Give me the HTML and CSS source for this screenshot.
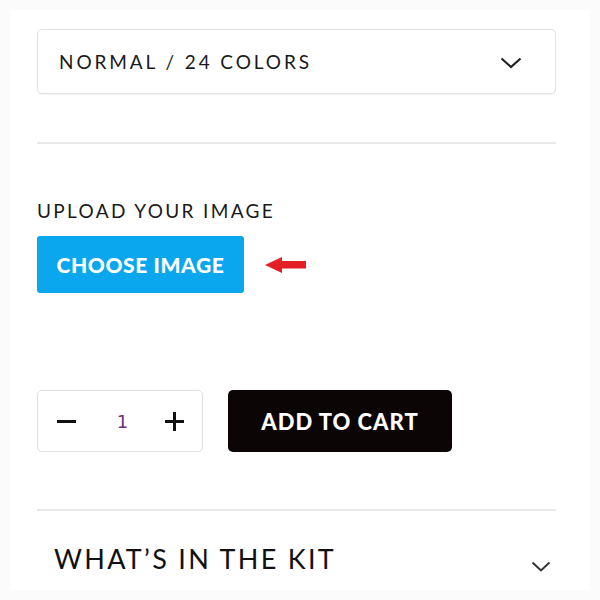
FILE: index.html
```html
<!DOCTYPE html>
<html>
<head>
<meta charset="utf-8">
<link rel="stylesheet" href="styles.css">
</head>
<body>
<div class="card">
  <div class="select">
    <span class="select-text">NORMAL / 24 COLORS</span>
    <svg class="chev" width="22" height="12" viewBox="0 0 22 12"><path d="M1.5 1.5 L11 10 L20.5 1.5" fill="none" stroke="#222" stroke-width="2.2"/></svg>
  </div>
  <div class="divider d1"></div>
  <div class="label">UPLOAD YOUR IMAGE</div>
  <div class="upload-row">
    <button class="choose">CHOOSE IMAGE</button>
    <svg class="arrow" width="42" height="16" viewBox="0 0 42 16"><path d="M0 8 L17 0 L17 4 L41 4 L41 11.5 L17 11.5 L17 16 Z" fill="#e31e24"/></svg>
  </div>
  <div class="cart-row">
    <div class="qty">
      <span class="minus"></span>
      <span class="num">1</span>
      <span class="plus"></span>
    </div>
    <button class="add">ADD TO CART</button>
  </div>
  <div class="divider d2"></div>
  <div class="kit">
    <span class="kit-title">WHAT’S IN THE KIT</span>
    <svg class="chev2" width="20" height="11" viewBox="0 0 20 11"><path d="M1.5 1.5 L10 9.5 L18.5 1.5" fill="none" stroke="#333" stroke-width="2"/></svg>
  </div>
</div>
</body>
</html>
```
FILE: styles.css
```css
* { box-sizing: border-box; }
html, body { margin: 0; padding: 0; }
body { background: #fbfbfb; width: 600px; height: 600px; overflow: hidden; font-family: "Lato", "DejaVu Sans", sans-serif; }
.card { margin: 10px; width: 580px; height: 580px; background: #fff; padding: 19px 34px 0 27px; display: flex; flex-direction: column; }
.select { height: 65px; border: 1.5px solid #e2e2e2; border-radius: 5px; display: flex; align-items: center; justify-content: space-between; padding: 0 33px 0 21px; box-shadow: 0 1px 1px rgba(0,0,0,0.05); }
.select-text { font-size: 19px; letter-spacing: 2.9px; color: #1a1a1a; font-weight: 400; }
.chev { margin-top: 2px; }
.divider { height: 2px; background: #e8e8e8; }
.d1 { margin-top: 48px; }
.label { margin-top: 55px; font-size: 19px; letter-spacing: 2.35px; color: #1a1a1a; line-height: 24px; }
.upload-row { margin-top: 13px; display: flex; align-items: center; }
.choose { width: 207px; height: 57px; border: none; border-radius: 3px; background: #0aa6ee; color: #fff; font-family: "Lato", sans-serif; font-weight: 900; font-size: 21px; letter-spacing: 0.6px; padding: 0; }
.arrow { margin-left: 21px; margin-top: 0px; }
.cart-row { margin-top: 97px; display: flex; gap: 25px; }
.qty { width: 166px; height: 62px; border: 1.5px solid #e0e0e0; border-radius: 5px; display: flex; align-items: center; justify-content: space-between; padding: 0 18px 0 19px; }
.minus { width: 19px; height: 3px; background: #111; }
.plus { width: 19px; height: 19px; position: relative; }
.plus::before, .plus::after { content: ""; position: absolute; background: #111; }
.plus::before { left: 0; top: 8px; width: 19px; height: 3px; }
.plus::after { left: 8px; top: 0; width: 3px; height: 19px; }
.num { font-size: 18px; color: #6b2f7a; font-family: "DejaVu Sans", sans-serif; margin-left: 4px; }
.add { width: 224px; height: 62px; border: none; border-radius: 5px; background: #0b0505; color: #fff; font-family: "Lato", sans-serif; font-weight: 900; font-size: 22px; letter-spacing: 1px; padding: 0; }
.d2 { margin-top: 57px; }
.kit { margin-top: 30px; display: flex; align-items: center; justify-content: space-between; padding: 0 5px 0 17px; }
.kit-title { font-size: 27px; letter-spacing: 2.3px; color: #111; line-height: 36px; }
.chev2 { margin-top: 14px; }
```
